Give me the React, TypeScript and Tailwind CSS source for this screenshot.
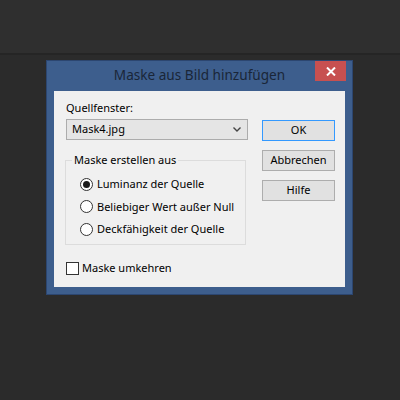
import React from "react";

const Radio = ({ checked, label }: { checked?: boolean; label: string }) => (
  <label className="flex items-center h-[22.5px] whitespace-nowrap">
    <span className="w-[13px] h-[13px] rounded-full border border-[#333333] bg-white flex items-center justify-center">
      {checked && <span className="w-[7px] h-[7px] rounded-full bg-[#1a1a1a]" />}
    </span>
    <span className="ml-[4px]">{label}</span>
  </label>
);

const Button = ({ label, primary }: { label: string; primary?: boolean }) => (
  <button
    className={
      "w-[73px] h-[21px] flex items-center justify-center bg-[#e1e1e1] border " +
      (primary ? "border-[#3399ff]" : "border-[#adadad]")
    }
  >
    {label}
  </button>
);

export default function App() {
  return (
    <div className="w-[400px] h-[400px] flex flex-col bg-[#2b2b2b] font-['Segoe_UI','Noto_Sans',sans-serif] text-[11px] text-black">
      {/* top toolbar band */}
      <div className="h-[55px] bg-[#2f2f2f] border-b-2 border-[#252525]" />

      <div className="pl-[46px] pt-[5px]">
        {/* dialog window */}
        <div className="w-[307px] h-[235px] border border-[#2c4670] bg-[#3d5e8d] flex flex-col">
          {/* title bar */}
          <div className="h-[30px] grid grid-cols-[1fr_auto_1fr]">
            <div />
            <div className="text-[13.6px] leading-[26px] text-[#1a2638] pt-[1px] whitespace-nowrap">
              Maske aus Bild hinzufügen
            </div>
            <div className="flex justify-end pr-[6px]">
              <div className="w-[31px] h-[20px] bg-[#c75050] flex items-center justify-center">
                <svg width="10" height="9" viewBox="0 0 10 9">
                  <path d="M1 0.5 L9 8.5 M9 0.5 L1 8.5" stroke="white" strokeWidth="2" />
                </svg>
              </div>
            </div>
          </div>

          {/* client area */}
          <div className="ml-[7px] w-[291px] h-[196px] bg-[#f0f0f0] flex">
            <div className="ml-[12px] w-[182px] flex flex-col">
              <div className="mt-[9px] leading-[16px]">Quellfenster:</div>
              <div className="mt-[3px] h-[21px] border border-[#acacac] bg-[#e5e5e5] flex items-center justify-between pl-[5px] pr-[6px]">
                <span>Mask4.jpg</span>
                <svg width="8" height="5" viewBox="0 0 8 5">
                  <path d="M0.5 0.5 L4 4 L7.5 0.5" stroke="#444" strokeWidth="1.4" fill="none" />
                </svg>
              </div>

              <fieldset className="mt-[12px] -ml-[1px] w-[181px] h-[93px] border border-[#dcdcdc] pl-[14px]">
                <legend className="-ml-[8px] px-[2px] leading-[16px] whitespace-nowrap">Maske erstellen aus</legend>
                <div className="flex flex-col mt-[5px]">
                  <Radio checked label="Luminanz der Quelle" />
                  <Radio label="Beliebiger Wert außer Null" />
                  <Radio label="Deckfähigkeit der Quelle" />
                </div>
              </fieldset>

              <label className="mt-[15px] flex items-center whitespace-nowrap">
                <span className="w-[13px] h-[13px] border border-[#333333] bg-white" />
                <span className="ml-[3px]">Maske umkehren</span>
              </label>
            </div>

            <div className="ml-[14px] mt-[29px] flex flex-col gap-[9px]">
              <Button primary label="OK" />
              <Button label="Abbrechen" />
              <Button label="Hilfe" />
            </div>
          </div>
        </div>
      </div>
    </div>
  );
}
